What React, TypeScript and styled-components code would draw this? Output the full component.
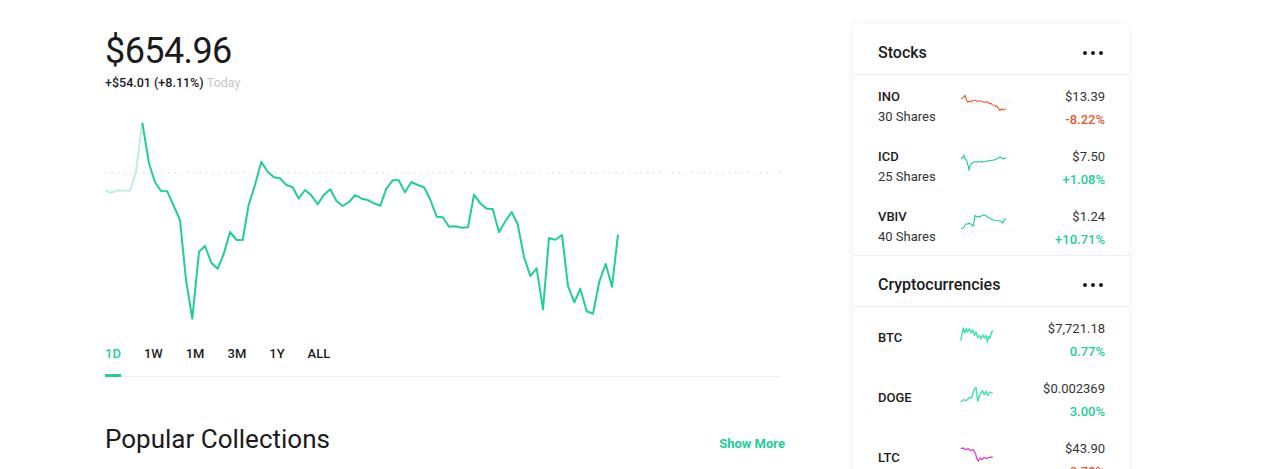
import React from "react";
import styled, { createGlobalStyle } from "styled-components";

const GREEN = "#21ce99";
const LIGHT_GREEN = "#bdf0df";
const RED = "#f45531";

const GlobalStyle = createGlobalStyle`
  body {
    margin: 0;
    background: #fff;
    font-family: Roboto, "Liberation Sans", sans-serif;
    color: #1b1b1d;
  }
`;

const Page = styled.div`
  display: flex;
  align-items: flex-start;
  gap: 68px;
  padding-left: 105px;
  height: 469px;
  overflow: hidden;
`;

const Main = styled.div`
  width: 680px;
  padding-top: 33px;
`;

const Price = styled.div`
  font-size: 36px;
  line-height: 36px;
  font-weight: 400;
  letter-spacing: -0.6px;
`;

const Change = styled.div`
  margin-top: 6px;
  font-size: 12.5px;
  line-height: 16px;
  font-weight: 500;
  span {
    color: #c8c8c8;
    font-weight: 400;
  }
`;

const ChartSvg = styled.svg`
  display: block;
  margin-top: 1px;
  width: 678px;
  height: 240px;
`;

const Tabs = styled.div`
  display: flex;
  gap: 23px;
  margin-top: 14px;
  width: 676px;
  border-bottom: 1px solid #eeeeee;
`;

const Tab = styled.div<{ active?: boolean }>`
  font-size: 13px;
  line-height: 16px;
  font-weight: 500;
  padding-bottom: 12px;
  margin-bottom: -1px;
  border-bottom: 3px solid ${(p) => (p.active ? GREEN : "transparent")};
  color: ${(p) => (p.active ? GREEN : "#1b1b1d")};
`;

const SectionHead = styled.div`
  display: flex;
  justify-content: space-between;
  align-items: baseline;
  margin-top: 47px;
  h2 {
    margin: 0;
    font-size: 26px;
    line-height: 30px;
    font-weight: 400;
  }
  a {
    color: ${GREEN};
    font-size: 13px;
    font-weight: 700;
    text-decoration: none;
  }
`;

const Card = styled.div`
  margin-top: 24px;
  width: 276px;
  background: #fff;
  border-radius: 4px;
  box-shadow: 0 1px 10px rgba(0, 0, 0, 0.07);
`;

const Section = styled.div`
  & + & {
    border-top: 1px solid #eeeeee;
  }
`;

const CardHeader = styled.div`
  display: flex;
  justify-content: space-between;
  align-items: center;
  height: 51px;
  padding: 7px 26px 0 25px;
  box-sizing: border-box;
  border-bottom: 1px solid #eeeeee;
  font-size: 16px;
  font-weight: 500;
`;

const Row = styled.div`
  display: grid;
  grid-template-columns: 82px 57px 1fr;
  align-items: start;
  height: 60px;
  box-sizing: border-box;
  padding: 12px 24px 0 25px;
  font-size: 13px;
  line-height: 20px;
`;

const Symbol = styled.div<{ single?: boolean }>`
  font-weight: 500;
  margin-top: ${(p) => (p.single ? "9px" : "0")};
`;

const Sub = styled.div`
  color: #333;
`;

const Spark = styled.svg<{ top: number }>`
  display: block;
  margin-top: ${(p) => p.top}px;
  overflow: visible;
`;

const Right = styled.div`
  text-align: right;
  color: #333;
`;

const Pct = styled.div<{ color: string }>`
  margin-top: 3px;
  color: ${(p) => p.color};
  font-weight: 500;
`;

const Dots = () => (
  <svg width="20" height="4" viewBox="0 0 20 4">
    <circle cx="2" cy="2" r="2" fill="#1b1b1d" />
    <circle cx="10" cy="2" r="2" fill="#1b1b1d" />
    <circle cx="18" cy="2" r="2" fill="#1b1b1d" />
  </svg>
);

const pre = "0,98.7 6,100.7 12.7,98.3 25,98.7 31,79.7 37.3,30.7";
const day =
  "37.3,30.7 44,71.3 50,90.3 56,99 62.3,99.3 75,128 81,188 87.3,226.7 94,159.7 100,154 106.3,170.7 112.7,176.7 118.7,162 125,140 131.7,148 137.7,148 143.7,112.7 150,93 156.3,69.7 162.7,79.7 169,85.3 175,86.3 181.3,93 187.7,95.3 193.7,106.7 200,98 206.3,103.3 212.7,112.3 218.7,103 225.3,97.3 231.3,108.7 237.7,114 244,110 250.3,103 256.7,106.7 262.7,108 269,111.3 275.3,113.7 281.3,96.7 287.7,88.3 293.7,88.3 300,100.3 306.3,90 312.7,93 319,95.3 325,107 331.7,124.7 337.7,125.3 344,134.7 350.3,134.3 356.7,135.7 363,135.3 369,102.7 375.3,111.3 381.7,116.7 387.7,117 394,140.3 400.3,129.3 406.7,120 412.7,132.3 419,164.7 425.3,184 431.7,176.3 438,217.3 444,146 450.3,147.7 457,143 463,194 469.3,210.3 475.3,196.7 481.7,219.3 488,221.7 494.3,189.7 500.7,172 507,194.7 513,142.7";

const stocks = [
  {
    sym: "INO",
    shares: "30 Shares",
    price: "$13.39",
    pct: "-8.22%",
    color: RED,
    base: 11.7,
    pts: "1,7.7 2.5,7 4,5.7 5,4.3 6.7,9.3 7.7,11.3 9,10 11,11 12,9.8 13.3,9.3 15.7,9.3 17,10.2 18.3,10.3 20,9.8 21.7,10.3 23.5,11.2 25,11 27.3,10.7 28.5,12 30,12.7 31,12.2 32.3,14 35,14.3 36,15.6 37,15.3 38.3,17 40,19.3 41.7,18 43,19 44,18.7 46,18",
  },
  {
    sym: "ICD",
    shares: "25 Shares",
    price: "$7.50",
    pct: "+1.08%",
    color: GREEN,
    base: 6,
    pts: "1,7.7 3.3,6 4,4 5,7.7 6.7,10 8.3,15.3 9,19.3 10,14.3 12.3,12 14.3,10.7 16.7,11.3 18,10.6 20,11 21.5,10.5 23.3,11 25,10.2 26.7,10.3 28.5,9.6 30,10 31.5,9.2 33.3,9.3 35,8.5 36.7,8 38.5,6.8 40,6 41.7,7 43.3,8 45,7.3 46,7.3",
  },
  {
    sym: "VBIV",
    shares: "40 Shares",
    price: "$1.24",
    pct: "+10.71%",
    color: GREEN,
    base: 20,
    pts: "1,17.7 3.3,16.7 5,14.3 6,12.7 7.7,13.3 9,12 11,13.3 13.3,15 14.3,9.3 15,4.3 16.7,6 18.3,5.3 20,6 22.3,4.3 25,4 27.3,6 30,7.3 32.3,8.7 35,9.3 38.3,9.7 41,10.3 42.7,12 44,9.3 45.7,7.3",
  },
];

const crypto = [
  {
    sym: "BTC",
    price: "$7,721.18",
    pct: "0.77%",
    pctColor: GREEN,
    color: "#2ee6a4",
    pts: "0.7,16.7 2,10 3.3,4 4.7,9 6,4.7 7.7,8 9.3,4.7 11,9 12.7,5.7 14.3,11.3 16,8 17.7,13.3 19.3,11.3 21,14.7 22.7,10.7 24.3,14 26,11.3 27.3,18 28.7,12.3 30,14 31.7,8 33.3,6.7",
  },
  {
    sym: "DOGE",
    price: "$0.002369",
    pct: "3.00%",
    pctColor: GREEN,
    color: "#2ee6a4",
    pts: "0.7,18 3.3,15.7 6.7,16.7 9.3,13.3 11.7,14 14,5.7 16,3.3 17.7,17.3 19.3,12.3 21,9 22.7,6.7 24.3,10.7 26,7.3 27.7,11.3 30,8 32.7,9",
  },
  {
    sym: "LTC",
    price: "$43.90",
    pct: "-0.78%",
    pctColor: RED,
    color: "#e83ad0",
    pts: "0.7,4.7 3.3,4 6,5.7 8.3,4.7 10.7,6.7 13.3,5.7 15.3,9 16.7,14 18.3,17.3 20,14 22,15.7 24,13.3 26.7,14.7 29.3,13.3 32.7,13",
  },
];

const ranges = ["1D", "1W", "1M", "3M", "1Y", "ALL"];

export default function App() {
  return (
    <>
      <GlobalStyle />
      <Page>
        <Main>
          <Price>$654.96</Price>
          <Change>
            +$54.01 (+8.11%) <span>Today</span>
          </Change>
          <ChartSvg viewBox="0 0 678 240">
            <line
              x1="0"
              y1="80.7"
              x2="677"
              y2="80.7"
              stroke="#dedede"
              strokeWidth="1.5"
              strokeDasharray="1.5 4.8"
            />
            <polyline points={pre} fill="none" stroke={LIGHT_GREEN} strokeWidth="2" strokeLinejoin="round" />
            <polyline points={day} fill="none" stroke={GREEN} strokeWidth="2" strokeLinejoin="round" />
          </ChartSvg>
          <Tabs>
            {ranges.map((r, i) => (
              <Tab key={r} active={i === 0}>
                {r}
              </Tab>
            ))}
          </Tabs>
          <SectionHead>
            <h2>Popular Collections</h2>
            <a href="#">Show More</a>
          </SectionHead>
        </Main>
        <Card>
          <Section>
            <CardHeader>
              Stocks
              <Dots />
            </CardHeader>
            {stocks.map((s) => (
              <Row key={s.sym}>
                <div>
                  <Symbol>{s.sym}</Symbol>
                  <Sub>{s.shares}</Sub>
                </div>
                <Spark top={4} width="57" height="25" viewBox="0 0 57 25">
                  <line x1="1" y1={s.base} x2="56" y2={s.base} stroke="#dcdcdc" strokeWidth="1" strokeDasharray="1 4.5" />
                  <polyline points={s.pts} fill="none" stroke={s.color} strokeWidth="1.1" strokeLinejoin="round" />
                </Spark>
                <Right>
                  <div>{s.price}</div>
                  <Pct color={s.color}>{s.pct}</Pct>
                </Right>
              </Row>
            ))}
          </Section>
          <Section>
            <CardHeader>
              Cryptocurrencies
              <Dots />
            </CardHeader>
            {crypto.map((c) => (
              <Row key={c.sym}>
                <Symbol single>{c.sym}</Symbol>
                <Spark top={5} width="34" height="20" viewBox="0 0 34 20">
                  <polyline points={c.pts} fill="none" stroke={c.color} strokeWidth="1.3" strokeLinejoin="round" />
                </Spark>
                <Right>
                  <div>{c.price}</div>
                  <Pct color={c.pctColor}>{c.pct}</Pct>
                </Right>
              </Row>
            ))}
          </Section>
        </Card>
      </Page>
    </>
  );
}
